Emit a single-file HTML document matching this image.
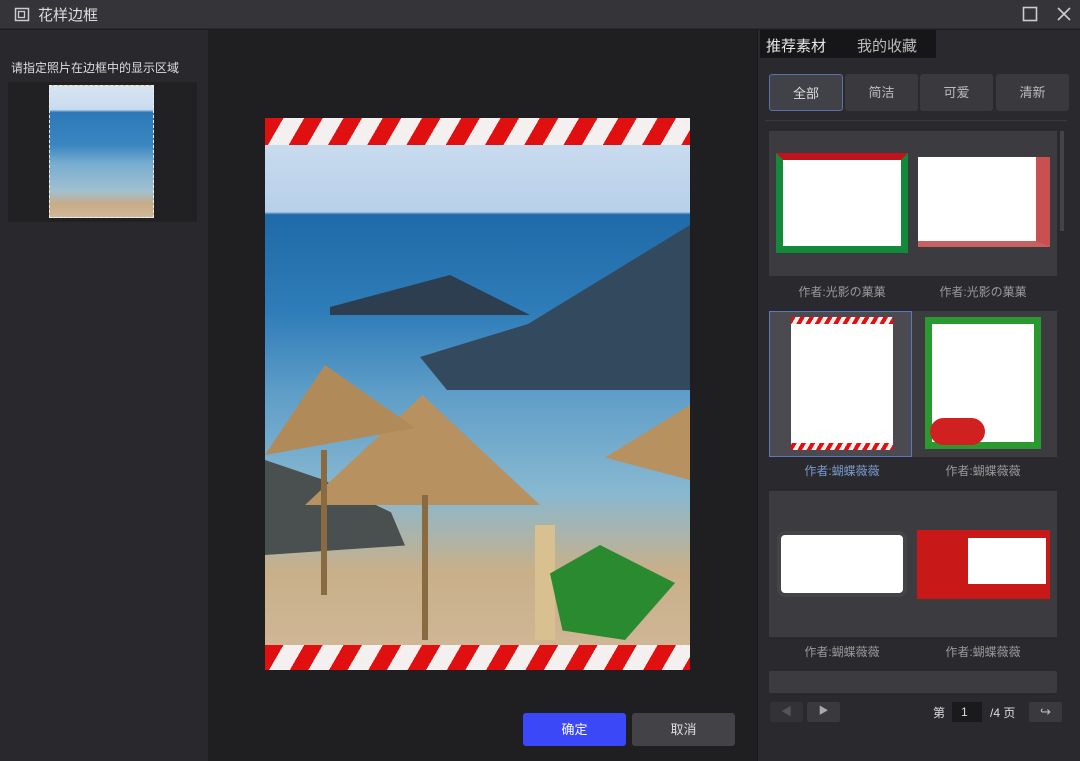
<!DOCTYPE html><html><head><meta charset="utf-8"><style>
*{margin:0;padding:0;box-sizing:border-box}
body{width:1080px;height:761px;background:#1f1f22;font-family:"Liberation Sans","Noto Sans CJK SC",sans-serif;position:relative;overflow:hidden;color:#ddd}
.a{position:absolute}
.stripe{background:repeating-linear-gradient(120deg,#e01010 0 16px,#f4f0f0 16px 34px)}
.btn{position:absolute;top:74px;height:37px;background:#3a3a3e;border-radius:3px;font-size:13px;color:#bbb;text-align:center;line-height:37px}
.cap{position:absolute;font-size:12px;color:#999;width:140px;text-align:center}
</style></head><body>
<div class="a" style="left:0;top:0;width:1080px;height:29px;background:#353539;border-bottom:1px solid #2a2a2a"></div>
<svg class="a" style="left:14px;top:7px" width="16" height="16"><rect x="1.5" y="1.5" width="13" height="12" fill="none" stroke="#ccc" stroke-width="1.5"/><rect x="4.5" y="4.5" width="6" height="6" fill="none" stroke="#ccc" stroke-width="1.3"/></svg>
<div class="a" style="left:38px;top:4px;font-size:15px;color:#ddd">花样边框</div>
<svg class="a" style="left:1022px;top:6px" width="16" height="16"><rect x="1.5" y="1.5" width="13" height="13" fill="none" stroke="#ccc" stroke-width="1.6"/></svg>
<svg class="a" style="left:1056px;top:6px" width="16" height="16"><path d="M2 2L14 14M14 2L2 14" stroke="#ccc" stroke-width="1.6"/></svg>
<div class="a" style="left:0;top:30px;width:208px;height:731px;background:#29292d"></div>
<div class="a" style="left:11px;top:59px;font-size:12px;color:#ddd">请指定照片在边框中的显示区域</div>
<div class="a" style="left:8px;top:82px;width:189px;height:140px;background:#212124"></div>
<div class="a" style="left:49px;top:85px;width:105px;height:133px;background:linear-gradient(#d8e4f0 0,#c8dcef 18%,#2d78b8 20%,#3a86c0 45%,#7aaed0 60%,#a0c0d0 80%,#c8ac88 90%,#d0b898);border:1px dashed #eee"></div>
<div class="a" style="left:757px;top:30px;width:323px;height:731px;background:#2a2a2e;border-left:1px solid #18181a"></div>
<div class="a" style="left:760px;top:30px;width:176px;height:28px;background:#161618"></div>
<div class="a" style="left:766px;top:35px;font-size:15px;color:#e6e6e6">推荐素材</div>
<div class="a" style="left:857px;top:35px;font-size:15px;color:#bbb">我的收藏</div>
<div class="btn" style="left:769px;width:74px;background:#414148;border:1px solid #5a70b0;color:#ddd">全部</div>
<div class="btn" style="left:845px;width:73px">简洁</div>
<div class="btn" style="left:920px;width:73px">可爱</div>
<div class="btn" style="left:996px;width:73px">清新</div>
<div class="a" style="left:765px;top:120px;width:302px;height:1px;background:#3a3a3e"></div>
<div class="a" style="left:769px;top:131px;width:288px;height:145px;background:#3c3c40"></div>
<div class="a" style="left:776px;top:153px;width:132px;height:100px;background:#fff;border:7px solid #138a3a;border-top-color:#c0141c"></div>
<div class="a" style="left:918px;top:157px;width:132px;height:90px;background:#fff;border-right:14px solid #c85050;border-bottom:6px solid #c86060"></div>
<div class="cap" style="left:772px;top:283px">作者:光影の菓菓</div>
<div class="cap" style="left:913px;top:283px">作者:光影の菓菓</div>
<div class="a" style="left:769px;top:311px;width:143px;height:146px;background:#4a4a50;border:1px solid #5a78c0"></div>
<div class="a" style="left:912px;top:311px;width:145px;height:146px;background:#3c3c40"></div>
<div class="a" style="left:791px;top:317px;width:102px;height:133px;background:repeating-linear-gradient(120deg,#e01010 0 4px,#f4f0f0 4px 8px)"></div>
<div class="a" style="left:791px;top:324px;width:102px;height:119px;background:#fff"></div>
<div class="a" style="left:925px;top:317px;width:116px;height:132px;background:#fff;border:7px solid #2a9a30"></div>
<div class="a" style="left:930px;top:418px;width:55px;height:27px;background:#d02020;border-radius:14px"></div>
<div class="cap" style="left:772px;top:462px;color:#7a9ad0">作者:蝴蝶薇薇</div>
<div class="cap" style="left:913px;top:462px">作者:蝴蝶薇薇</div>
<div class="a" style="left:769px;top:491px;width:288px;height:146px;background:#3c3c40"></div>
<div class="a" style="left:777px;top:531px;width:130px;height:66px;background:#fff;border:4px solid #444;border-radius:8px"></div>
<div class="a" style="left:917px;top:530px;width:133px;height:69px;background:#c81818"></div>
<div class="a" style="left:968px;top:538px;width:78px;height:46px;background:#fff"></div>
<div class="cap" style="left:772px;top:643px">作者:蝴蝶薇薇</div>
<div class="cap" style="left:913px;top:643px">作者:蝴蝶薇薇</div>
<div class="a" style="left:769px;top:671px;width:288px;height:22px;background:#3c3c40;border-radius:2px"></div>
<div class="a" style="left:1060px;top:131px;width:4px;height:100px;background:#444"></div>
<div class="a" style="left:770px;top:702px;width:33px;height:20px;background:#333337;border-radius:2px;color:#555;font-size:11px;text-align:center;line-height:20px">◀</div>
<div class="a" style="left:807px;top:702px;width:33px;height:20px;background:#3a3a3e;border-radius:2px;color:#aaa;font-size:10px;text-align:center;line-height:20px">▶</div>
<div class="a" style="left:933px;top:704px;font-size:12px;color:#ddd">第</div>
<div class="a" style="left:952px;top:702px;width:30px;height:20px;background:#1a1a1c;font-size:12px;color:#ddd;padding-left:9px;line-height:20px">1</div>
<div class="a" style="left:990px;top:704px;font-size:12px;color:#ddd">/4 页</div>
<div class="a" style="left:1029px;top:702px;width:33px;height:20px;background:#3a3a3e;border-radius:2px;color:#bbb;font-size:13px;text-align:center;line-height:20px">↪</div>
<div class="a" style="left:265px;top:118px;width:425px;height:552px;background:linear-gradient(#cfdff0 0,#b8d0ea 17%,#1f6aa8 17.5%,#2e7cb8 35%,#5f9ec8 50%,#88b8d0 68%,#c8b08a 82%,#d2b898 100%)"></div>
<div class="a" style="left:420px;top:225px;width:270px;height:165px;background:#33495e;clip-path:polygon(0 80%,40% 60%,70% 30%,100% 0,100% 100%,10% 100%)"></div>
<div class="a" style="left:330px;top:275px;width:200px;height:40px;background:#2c3e50;clip-path:polygon(0 80%,30% 40%,60% 0,100% 100%,0 100%)"></div>
<div class="a" style="left:265px;top:460px;width:140px;height:95px;background:#4a5050;clip-path:polygon(0 0,40% 20%,90% 55%,100% 90%,0 100%)"></div>
<div class="a" style="left:305px;top:395px;width:235px;height:110px;background:#b89160;clip-path:polygon(50% 0,100% 100%,0 100%)"></div>
<div class="a" style="left:265px;top:365px;width:150px;height:90px;background:#b08a58;clip-path:polygon(40% 0,100% 70%,0 100%)"></div>
<div class="a" style="left:605px;top:405px;width:85px;height:75px;background:#b89160;clip-path:polygon(100% 0,100% 100%,0 70%)"></div>
<div class="a" style="left:422px;top:495px;width:6px;height:145px;background:#8a6a40"></div>
<div class="a" style="left:321px;top:450px;width:6px;height:145px;background:#8a6a40"></div>
<div class="a" style="left:535px;top:525px;width:20px;height:115px;background:#d8c090"></div>
<div class="a" style="left:550px;top:545px;width:125px;height:95px;background:#2a8a30;clip-path:polygon(0 30%,40% 0,100% 40%,60% 100%,10% 90%)"></div>
<div class="a stripe" style="left:265px;top:118px;width:425px;height:27px"></div>
<div class="a stripe" style="left:265px;top:645px;width:425px;height:25px"></div>
<div class="a" style="left:523px;top:713px;width:103px;height:33px;background:#3a48f8;border-radius:3px;color:#fff;font-size:13px;text-align:center;line-height:33px">确定</div>
<div class="a" style="left:632px;top:713px;width:103px;height:33px;background:#434347;border-radius:3px;color:#ddd;font-size:13px;text-align:center;line-height:33px">取消</div>
</body></html>
